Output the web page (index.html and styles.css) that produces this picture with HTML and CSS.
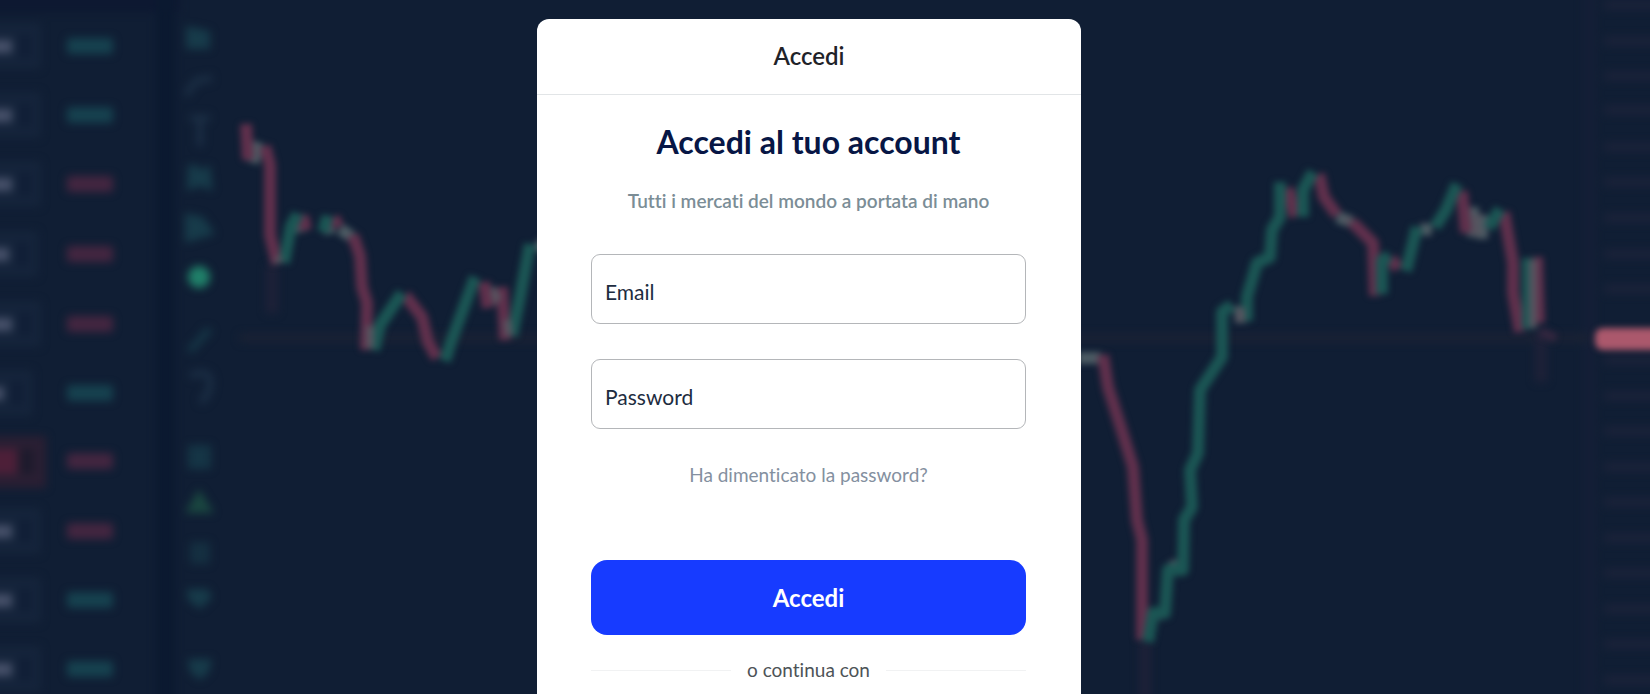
FILE: index.html
```html
<!DOCTYPE html>
<html lang="it">
<head>
<meta charset="utf-8">
<meta name="viewport" content="width=device-width, initial-scale=1">
<title>Accedi</title>
<link rel="stylesheet" href="styles.css">
</head>
<body>
<svg class="backdrop" viewBox="0 0 1650 694" preserveAspectRatio="xMidYMid slice" aria-hidden="true">
  <defs>
    <filter id="soft" x="-5%" y="-5%" width="110%" height="110%" color-interpolation-filters="sRGB"><feGaussianBlur stdDeviation="4"/></filter>
    <filter id="line-soft" x="-5%" y="-5%" width="110%" height="110%" color-interpolation-filters="sRGB"><feGaussianBlur stdDeviation="3"/></filter>
    <g id="tag"><rect x="-10" y="-23" width="51" height="46" rx="4" fill="#15243b"/><rect x="19" y="-12" width="12" height="24" fill="#101e36"/><rect x="-10" y="-6" width="22" height="13" fill="#465069"/></g>
    <rect id="pill" x="67" y="-8" width="46" height="16" rx="3"/>
  </defs>
  <rect width="1650" height="694" fill="#101e34"/>
  <g filter="url(#soft)">
    <rect x="-20" y="-20" width="200" height="32" fill="#0d1831"/>
    <rect x="156" y="-20" width="19" height="740" fill="#0b1930"/>
    <use href="#tag" y="46"/><use href="#tag" y="115"/><use href="#tag" y="184"/><use href="#tag" x="-3" y="254"/><use href="#tag" y="324"/><use href="#tag" x="-8" y="393"/><use href="#tag" y="531"/><use href="#tag" y="600"/><use href="#tag" y="669"/>
    <rect x="-10" y="436" width="56" height="52" fill="#2a1f33"/><rect x="-10" y="449" width="27" height="25" fill="#4d1f38"/><rect x="20" y="449" width="14" height="25" fill="#1d1a2c"/>
    <g fill="#16414f"><use href="#pill" y="46"/><use href="#pill" y="115"/><use href="#pill" y="393"/><use href="#pill" y="600"/><use href="#pill" y="669"/></g>
    <g fill="#442640"><use href="#pill" y="184"/><use href="#pill" y="254"/><use href="#pill" y="324"/><use href="#pill" y="461"/><use href="#pill" y="531"/></g>
    <g fill="#173b4a">
      <path d="M186 26l24 5v18h-24z"/><path d="M188 165h9l3 5 10-5 3 26-13-5-13 5z"/>
      <path d="M185 213l18 4 12 17-30 9z"/><path d="M186 350l20-23 7 4-20 22z" opacity=".8"/>
      <path d="M188 445h23v24h-23z" opacity=".8"/><path d="M190 542h20v22h-20z" opacity=".6"/>
      <path d="M187 589h21l4 9-12 11-12-9z"/><path d="M188 659h24l-3 13-9 8-10-8z"/>
    </g>
    <g fill="none" stroke="#1b2e44" stroke-width="7"><path d="M186 95l10-14 16-3M190 118h20M200 118v28M190 376q20-8 20 6t-10 20"/></g>
    <path d="M199 489l15 24h-29z" fill="#1a4640"/>
    <path d="M1589 -10V710" stroke="#151f37" stroke-width="12"/>
    <path d="M1604 5h60M1604 41h60M1604 76h60M1604 110h60M1604 147h60M1604 182h60M1604 218h60M1604 254h60M1604 289h60M1604 360h60M1604 396h60M1604 431h60M1604 467h60M1604 502h60M1604 538h60M1604 573h60M1604 609h60M1604 644h60M1604 680h60" stroke="#1a2239" stroke-width="10"/>
    <path d="M240 338H1590" stroke="#1b2234" stroke-width="8"/>
    <path d="M272 265v48M1145 640v60M1541 330v52" stroke="#1e2138" stroke-width="12"/>
    <circle cx="199" cy="277" r="11" fill="#208069"/>
  </g>
  <g filter="url(#line-soft)" fill="none" stroke-width="12" stroke-linejoin="round">
    <rect x="1595" y="328" width="80" height="22" rx="8" fill="#ab586c"/>
    <path stroke="#4c5b63" d="M258 142L253 163M298 215L302 232M326 217L330 234M340 229L352 237M495 287V305M536 243L548 250M1078 358H1101M1240 306L1241 323M1337 217L1352 222M1473 207V237M1482 215V239M1420 229L1432 230M1170 568L1178 564M1152 614H1162"/>
    <path stroke="#60304c" d="M246 124L248 160M265 146L270 165V235L277 264M303 216L306 230M334 217L338 227M353 235L360 256L362 287L367 303L366 350M405 295L422 317L428 342L437 358M484 282L488 308M502 287L505 340M1103 355L1108 387L1121 428L1133 467L1137 520L1142 540L1142 640M1288 188L1295 217M1319 174L1324 197L1337 215M1352 222L1373 243L1375 296M1391 258L1398 269M1462 191L1466 233M1504 212L1513 263V293L1520 332M1537 257L1539 323"/>
    <path stroke="#1b5654" d="M284 263L291 226L298 214M323 232L328 216M374 350L380 325L402 293M445 361L451 342L475 277M512 336L520 297L530 244M1148 642L1153 613H1165L1168 570H1183L1184 520L1192 507L1190 470L1198 453L1200 390L1222 357V312L1232 305M1247 321V297L1257 263L1270 257L1272 230L1280 217V182M1303 217V190L1313 172M1382 294V260L1390 256M1406 271L1417 227M1435 227L1446 210L1457 184M1489 228L1500 209M1528 258V329"/>
    <path stroke="#56545f" stroke-width="8" d="M1241 308V322M1347 217L1350 224M1477 214V236M1533 260V328M277 257L280 263M370 326V348M493 292L499 300M507 320L509 336"/>
    <path stroke="#33263f" stroke-width="9" d="M1540 332L1556 338"/>
  </g>
</svg>
<main class="page">
  <section class="card">
    <header class="card-header"><p class="card-name">Accedi</p></header>
    <form class="login">
      <h1 class="title">Accedi al tuo account</h1>
      <p class="subtitle">Tutti i mercati del mondo a portata di mano</p>
      <div class="fields">
        <div class="field">
          <input class="input" id="email" type="email" placeholder="Email" aria-label="Email">
        </div>
        <div class="field">
          <input class="input" id="password" type="password" placeholder="Password" aria-label="Password">
        </div>
      </div>
      <a class="forgot" href="#">Ha dimenticato la password?</a>
      <button class="submit" type="submit">Accedi</button>
      <div class="divider"><span>o continua con</span></div>
    </form>
  </section>
</main>
</body>
</html>
```
FILE: styles.css
```css
* { box-sizing: border-box; }

body {
  margin: 0;
  overflow: hidden;
  background: #101e34;
  font-family: Lato, "Open Sans", sans-serif;
  font-variant-ligatures: none;
}

.backdrop {
  position: fixed;
  inset: 0;
  width: 100%;
  height: 100%;
}

.page {
  position: relative;
  display: flex;
  justify-content: center;
  min-height: 100vh;
  padding: 19px 32px 0 0;
}

.card {
  width: 100%;
  max-width: 544px;
  border-radius: 12px 12px 0 0;
  background: #fff;
}

.card-header {
  padding: 19px 20px 21px;
  border-bottom: 1px solid #e2e5e7;
  text-align: center;
}

.card-name {
  margin: 0;
  color: #1f2329;
  font-size: 24px;
  font-weight: 600;
  line-height: 35px;
}

.login {
  display: flex;
  flex-direction: column;
  align-items: center;
  padding: 27px 55px 12px 54px;
}

.title {
  margin: 0;
  color: #071645;
  font-size: 32px;
  font-weight: 700;
  line-height: 40px;
}

.subtitle {
  margin: 25px 0 0;
  color: #7b8d96;
  font-size: 19px;
  font-weight: 600;
  line-height: 28px;
}

.fields {
  display: flex;
  flex-direction: column;
  gap: 35px;
  width: 100%;
  margin-top: 39px;
}

.field { display: flex; }

.input {
  width: 100%;
  height: 70px;
  padding: 5px 13px 0;
  border: 1px solid #b4b6b9;
  border-radius: 9px;
  background: #fff;
  color: #1d2c40;
  font: 400 21px/28px Lato, "Open Sans", sans-serif;
}

.input::placeholder {
  color: #1d2c40;
  opacity: 1;
}

.forgot {
  margin-top: 32px;
  color: #8490a0;
  font-size: 19px;
  line-height: 28px;
  text-decoration: none;
}

.submit {
  width: 100%;
  margin-top: 71px;
  padding: 20px;
  border: 0;
  border-radius: 16px;
  background: #173bff;
  color: #fff;
  font: 700 24px/35px Lato, "Open Sans", sans-serif;
}

.divider {
  display: flex;
  align-items: center;
  gap: 16px;
  width: 100%;
  margin-top: 21px;
  color: #4d5357;
  font-size: 19px;
  line-height: 28px;
}

.divider::before,
.divider::after {
  content: "";
  flex: 1;
  height: 1px;
  background: #f1f2f3;
}
```
